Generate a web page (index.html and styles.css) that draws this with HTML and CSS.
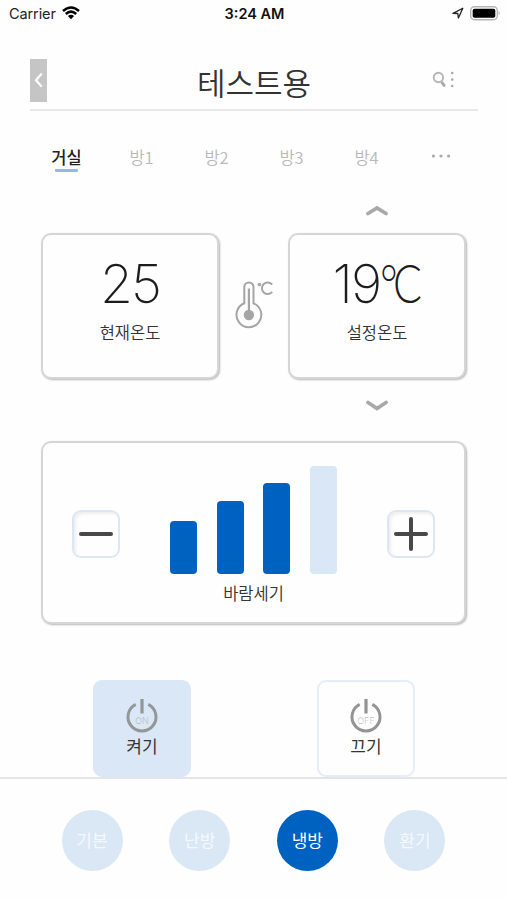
FILE: index.html
```html
<!DOCTYPE html>
<html lang="ko">
<head>
<meta charset="utf-8">
<title>테스트용</title>
<link rel="stylesheet" href="styles.css">
</head>
<body>
<div class="status">
  <div class="carrier"><span>Carrier</span>
    <svg width="18" height="14" viewBox="0 0 18 14"><g fill="none" stroke="#000" stroke-width="2.5"><path d="M1 5Q9-2 17 5"/><path d="M3.8 8Q9 3.3 14.2 8"/></g><path d="M5.9 10Q9 7.5 12.1 10L9 13.3Z"/></svg>
  </div>
  <div class="clock">3:24 AM</div>
  <div class="power">
    <svg width="12" height="12" viewBox="0 0 12 12"><path d="M1 6.4L10.8 1.2L6.4 11L5.8 6.5Z" fill="none" stroke="#222" stroke-width="1.3" stroke-linejoin="round"/></svg>
    <svg width="31" height="15" viewBox="0 0 31 15"><rect x=".7" y=".7" width="26.6" height="13" rx="3.8" fill="#fff" stroke="#b5b5b5" stroke-width="1.4"/><rect x="2.7" y="2.7" width="22.6" height="9" rx="1.8"/><path d="M28.6 5Q31 7.2 28.6 9.4Z" fill="#b5b5b5"/></svg>
  </div>
</div>
<header class="header">
  <div class="back"><svg width="17" height="42" viewBox="0 0 17 42"><path d="M11.8 14.5L6 21.2L11.8 27.8" fill="none" stroke="#fff" stroke-width="2.2"/></svg></div>
  <h1>테스트용</h1>
  <svg class="tools" width="24" height="18" viewBox="0 0 24 18"><circle cx="6.4" cy="6.5" r="4.7" fill="none" stroke="#b5b5b5" stroke-width="1.9"/><path d="M9.2 10L10.2 12" stroke="#b9b9b9" stroke-width="1.4"/><path d="M10.3 12L12.1 14.4" stroke="#aaa" stroke-width="3" stroke-linecap="round"/><g fill="#aaa"><circle cx="20.2" cy="2" r="1.3"/><circle cx="20.2" cy="8.6" r="1.3"/><circle cx="20.2" cy="15" r="1.3"/></g></svg>
</header>
<nav class="tabs">
  <span class="tab active">거실</span><span class="tab">방1</span><span class="tab">방2</span><span class="tab">방3</span><span class="tab">방4</span>
  <span class="tab more"><svg width="20" height="4" viewBox="0 0 20 4"><g fill="#aaa"><circle cx="2.4" cy="2" r="1.6"/><circle cx="10" cy="2" r="1.6"/><circle cx="17.6" cy="2" r="1.6"/></g></svg></span>
</nav>
<main>
  <section class="climate">
    <svg class="arrow" width="22" height="12" viewBox="0 0 22 12"><path d="M2 9.5L11 4L20 9.5" fill="none" stroke="#a9a9a9" stroke-width="3.8" stroke-linecap="round"/></svg>
    <div class="card temp"><span class="value">25</span><span class="label">현재온도</span></div>
    <svg class="thermo" width="39" height="48" viewBox="0 0 39 48"><g fill="none" stroke="#a5a5a5" stroke-width="2"><path d="M9.3 22.3V6A4.6 4.6 0 0 1 18.5 6V22.3A12.4 12.4 0 1 1 9.3 22.3Z"/><path d="M13.9 7.5V34" stroke-width="2.2"/><circle cx="24.4" cy="3.5" r="1.1" stroke-width="1.5"/><path d="M37.2 3.5A5.8 5.8 0 1 0 37.2 10.9"/></g><circle cx="13.9" cy="34" r="5.2" fill="#a5a5a5"/></svg>
    <div class="card temp"><span class="value target">19<span class="unit"><span class="degree">°</span>C</span></span><span class="label">설정온도</span></div>
    <svg class="arrow" width="22" height="12" viewBox="0 0 22 12"><path d="M2 2.5L11 8.5L20 2.5" fill="none" stroke="#a9a9a9" stroke-width="3.8" stroke-linecap="round"/></svg>
  </section>
  <section class="card fan">
    <div class="step"><svg width="36" height="36" viewBox="0 0 36 36"><path d="M3 18H33" stroke="#484848" stroke-width="4" stroke-linecap="round"/></svg></div>
    <div class="meter">
      <div class="bars"><i style="height:53px"></i><i style="height:73px"></i><i style="height:91px"></i><i class="off" style="height:108px"></i></div>
      <span class="label">바람세기</span>
    </div>
    <div class="step"><svg width="36" height="36" viewBox="0 0 36 36"><path d="M3 18H33M18 3V33" stroke="#484848" stroke-width="4" stroke-linecap="round"/></svg></div>
  </section>
  <section class="switches">
    <div class="switch on"><svg width="34" height="36" viewBox="0 0 34 36"><path d="M10.7 5.4A14 14 0 1 0 23.3 5.4" fill="none" stroke="#949799" stroke-width="3"/><path d="M17 0V14.5" stroke="#949799" stroke-width="3.2"/><text x="17" y="24.5">ON</text></svg><span>켜기</span></div>
    <div class="switch"><svg width="34" height="36" viewBox="0 0 34 36"><path d="M10.7 5.4A14 14 0 1 0 23.3 5.4" fill="none" stroke="#949494" stroke-width="3"/><path d="M17 0V14.5" stroke="#949494" stroke-width="3.2"/><text x="17" y="24.5">OFF</text></svg><span>끄기</span></div>
  </section>
</main>
<footer class="modes">
  <span class="mode">기본</span><span class="mode">난방</span><span class="mode selected">냉방</span><span class="mode">환기</span>
</footer>
</body>
</html>
```
FILE: styles.css
```css
* { box-sizing: border-box; }
body {
  margin: 0;
  width: 507px;
  height: 900px;
  overflow: hidden;
  display: flex;
  flex-direction: column;
  background: #fefefe;
  color: #333;
  font-family: "Noto Sans CJK KR", sans-serif;
}
svg { display: block; flex: none; }
.status {
  height: 59px;
  padding: 5px 6px 0 9px;
  display: grid;
  grid-template-columns: 1fr auto 1fr;
  align-items: start;
  font: 14.5px/18px Inter, sans-serif;
  color: #222;
}
.carrier { display: flex; gap: 6px; letter-spacing: -.1px; }
.carrier svg { margin-top: 1px; }
.clock { font-weight: 600; color: #111; margin-left: -1px; }
.power { display: flex; justify-content: flex-end; gap: 6px; padding-top: 1px; }
.power svg:first-child { margin-top: 1px; }
.header {
  height: 52px;
  margin: 0 29px 0 30px;
  display: grid;
  grid-template-columns: 1fr auto 1fr;
  border-bottom: 2px solid #e8e8e8;
}
.back { width: 17px; height: 43px; background: #c5c5c5; }
h1 { margin: 0; font-size: 31px; line-height: 46px; font-weight: 350; }
.tools { justify-self: end; margin: 12px 22px 0 0; }
.tabs {
  height: 93px;
  padding: 35px 0 0 29px;
  display: grid;
  grid-template-columns: repeat(6, 75px);
  align-items: start;
  justify-items: center;
}
.tab { font-size: 16.5px; line-height: 23px; font-weight: 350; color: #b8b8b8; }
.tab.active { color: #222; font-weight: 500; }
.tab.active::after { content: ""; display: block; width: 23px; height: 3px; margin: 0 auto; border-radius: 1px; background: #95b9e6; }
.more { padding-top: 8px; margin-right: 2px; }
.climate {
  margin: 0 41px;
  display: grid;
  grid-template-columns: 178px 69px 178px;
  grid-template-rows: 29px 146px 1fr;
  height: 237px;
}
.arrow { grid-column: 3; justify-self: center; }
.climate .arrow:last-child { margin-top: 21px; }
.card {
  background: #fefefe;
  border: 2px solid #d6d6d6;
  border-radius: 10px;
  box-shadow: 1px 1px 2px #b8b8b8;
}
.temp { display: flex; flex-direction: column; align-items: center; padding-top: 21px; }
.value { height: 56px; font: 250 53.5px/56px Inter, sans-serif; letter-spacing: -2px; color: #1c1c1c; }
.label { font-size: 16.5px; line-height: 24px; font-weight: 350; color: #333; }
.temp .label { margin-top: 8px; }
.thermo { align-self: start; justify-self: center; margin: 48px 0 0 2px; }
.unit {
  display: inline-block;
  margin-right: -10px;
  font-family: Lato, sans-serif;
  font-weight: 300;
  line-height: 50px;
  letter-spacing: 0;
  transform: scaleX(.8);
  transform-origin: left;
}
.target { padding-left: 1px; }
.degree { letter-spacing: -6px; }
.fan {
  height: 183px;
  margin: 0 41px;
  padding: 0 29px;
  display: flex;
  justify-content: space-between;
}
.step {
  width: 48px;
  height: 48px;
  margin-top: 67px;
  display: grid;
  place-items: center;
  border: 2px solid #dde7f3;
  border-radius: 9px;
  box-shadow: inset 2px 2px 3px #eeeeef;
}
.meter { display: flex; flex-direction: column; align-items: center; padding-top: 23px; }
.bars { height: 108px; display: flex; align-items: flex-end; gap: 19.5px; }
.bars i { width: 27px; border-radius: 4px; background: #0062c0; }
.bars .off { background: #dae7f6; }
.meter .label { margin-top: 7px; }
.switches { display: flex; justify-content: space-between; padding: 56px 92px 0 93px; }
.switch {
  width: 98px;
  height: 97px;
  padding-top: 17px;
  display: flex;
  flex-direction: column;
  align-items: center;
  border: 2px solid #e5edf8;
  border-radius: 9px;
  font-size: 17px;
  line-height: 25px;
}
.switch span { margin-top: -2px; }
.switch.on { background: #dae7f6; border-color: #dae7f6; }
.switch text { font: 200 9px Inter, sans-serif; text-anchor: middle; fill: #aaa; }
.modes {
  padding: 31px 61.5px 0;
  flex: 1;
  display: flex;
  justify-content: space-between;
  align-items: flex-start;
  border-top: 2px solid #e5e5e7;
}
.mode {
  width: 61px;
  height: 61px;
  border-radius: 50%;
  background: #dae7f5;
  color: #f5f9fd;
  font-size: 17px;
  line-height: 60px;
  text-align: center;
}
.mode.selected { background: #0062c0; color: #fff; }
```
